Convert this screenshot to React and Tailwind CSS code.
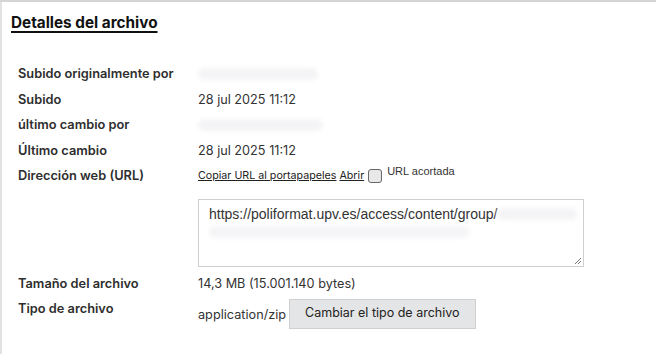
import React from "react";

const Blur = ({ w, className = "" }) => (
  <div className={`h-[12px] rounded-full bg-[#f4f4f6] blur-[2px] ${className}`} style={{ width: w }} />
);

const Row = ({ label, children, className = "" }) => (
  <div className={`flex items-center h-[25.5px] ${className}`}>
    <div className="w-[180px] shrink-0 text-[12.8px] font-semibold text-[#2e2e2e]">{label}</div>
    <div className="flex-1 text-[12.7px] text-[#333]">{children}</div>
  </div>
);

export default function App() {
  return (
    <div className="w-[656px] h-[354px] bg-white border-t-2 border-[#d4d4d4] overflow-hidden" style={{ fontFamily: "Inter, 'Noto Sans', sans-serif" }}>
      <div className="h-full border-l-2 border-[#e2e2e2] pl-[9px] pt-[9px]">
        <h2 className="text-[15.3px] font-bold text-[#111] underline underline-offset-[3px] decoration-[1.5px] leading-[24px]">
          Detalles del archivo
        </h2>
        <div className="mt-[26px] pl-[7px]">
          <Row label="Subido originalmente por">
            <Blur w={120} />
          </Row>
          <Row label="Subido">28 jul 2025 11:12</Row>
          <Row label="último cambio por">
            <Blur w={125} />
          </Row>
          <Row label="Último cambio">28 jul 2025 11:12</Row>
          <div className="flex items-start pt-[5px]">
            <div className="w-[180px] shrink-0 text-[12.8px] font-semibold text-[#2e2e2e] leading-[16px]">Dirección web (URL)</div>
            <div className="flex-1">
              <div className="flex items-center gap-[3px] text-[10.7px] text-[#222] leading-[14px] mt-[1px]">
                <a className="underline">Copiar URL al portapapeles</a>
                <a className="underline">Abrir</a>
                <span className="inline-block w-[14px] h-[14px] rounded-[3px] border border-[#666] bg-[#e8e8e8] ml-[1px]" />
                <span className="self-start -mt-[5px] ml-[2px] text-[11px] text-[#333]" style={{ fontFamily: "'Liberation Sans', Arial, sans-serif" }}>URL acortada</span>
              </div>
              <div className="relative mt-[16px] w-[386px] h-[68px] border border-[#cfcfcf] pl-[10px] pt-[5px] text-[14px] text-[#333] leading-[18px]" style={{ fontFamily: "'Liberation Sans', Arial, sans-serif" }}>
                <div className="flex items-center">
                  <span>https://poliformat.upv.es/access/content/group/</span>
                  <div className="h-[12px] w-[80px] bg-[#f4f4f6] blur-[2px] rounded-full" />
                </div>
                <div className="mt-[3px] h-[12px] w-[260px] bg-[#f5f5f7] blur-[2px] rounded-full" />
                <svg className="absolute right-[1px] bottom-[1px]" width="9" height="9" viewBox="0 0 9 9">
                  <line x1="8" y1="2" x2="2" y2="8" stroke="#777" strokeWidth="1" />
                  <line x1="8" y1="5" x2="5" y2="8" stroke="#777" strokeWidth="1" />
                </svg>
              </div>
            </div>
          </div>
          <Row label="Tamaño del archivo" className="mt-[4px]">14,3 MB (15.001.140 bytes)</Row>
          <div className="flex items-start">
            <div className="w-[180px] shrink-0 text-[12.8px] font-semibold text-[#2e2e2e] leading-[16px] pt-[4px]">Tipo de archivo</div>
            <div className="flex items-center text-[12.7px] text-[#333] pt-[2px]">
              <span className="pt-[2px]">application/zip</span>
              <button className="ml-[3px] h-[30px] px-[15px] bg-[#e4e5e6] border border-[#cfcfcf] text-[12.5px] text-[#222]">
                Cambiar el tipo de archivo
              </button>
            </div>
          </div>
        </div>
      </div>
    </div>
  );
}
